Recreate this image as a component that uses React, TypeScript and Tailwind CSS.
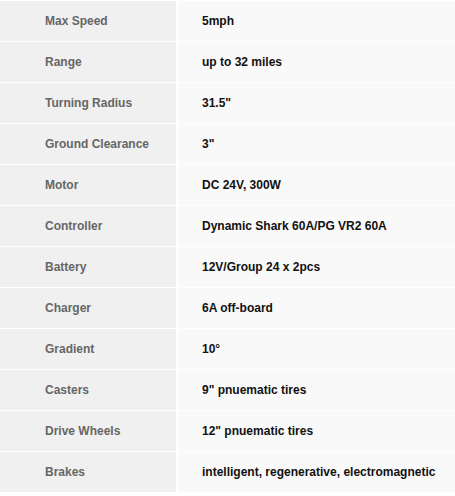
import React from "react";

const rows: [string, string][] = [
  ["Max Speed", "5mph"],
  ["Range", "up to 32 miles"],
  ["Turning Radius", "31.5\""],
  ["Ground Clearance", "3\""],
  ["Motor", "DC 24V, 300W"],
  ["Controller", "Dynamic Shark 60A/PG VR2 60A"],
  ["Battery", "12V/Group 24 x 2pcs"],
  ["Charger", "6A off-board"],
  ["Gradient", "10°"],
  ["Casters", "9\" pnuematic tires"],
  ["Drive Wheels", "12\" pnuematic tires"],
  ["Brakes", "intelligent, regenerative, electromagnetic"],
];

export default function App() {
  return (
    <div className="w-[455px] h-[496px] bg-white pt-px" style={{ fontFamily: '"Liberation Sans", Arial, sans-serif' }}>
      <div className="w-[455px] flex flex-col gap-y-px">
        {rows.map(([k, v]) => (
          <div key={k} className="grid grid-cols-[176px_1fr] gap-x-[2px] h-[40px]">
            <div className="bg-[#f0f0f0] flex items-center pl-[45px] text-[12px] font-bold text-[#666666]">{k}</div>
            <div className="bg-[#f9f9f9] flex items-center pl-[24px] text-[12px] font-bold text-[#111111]">{v}</div>
          </div>
        ))}
      </div>
    </div>
  );
}
